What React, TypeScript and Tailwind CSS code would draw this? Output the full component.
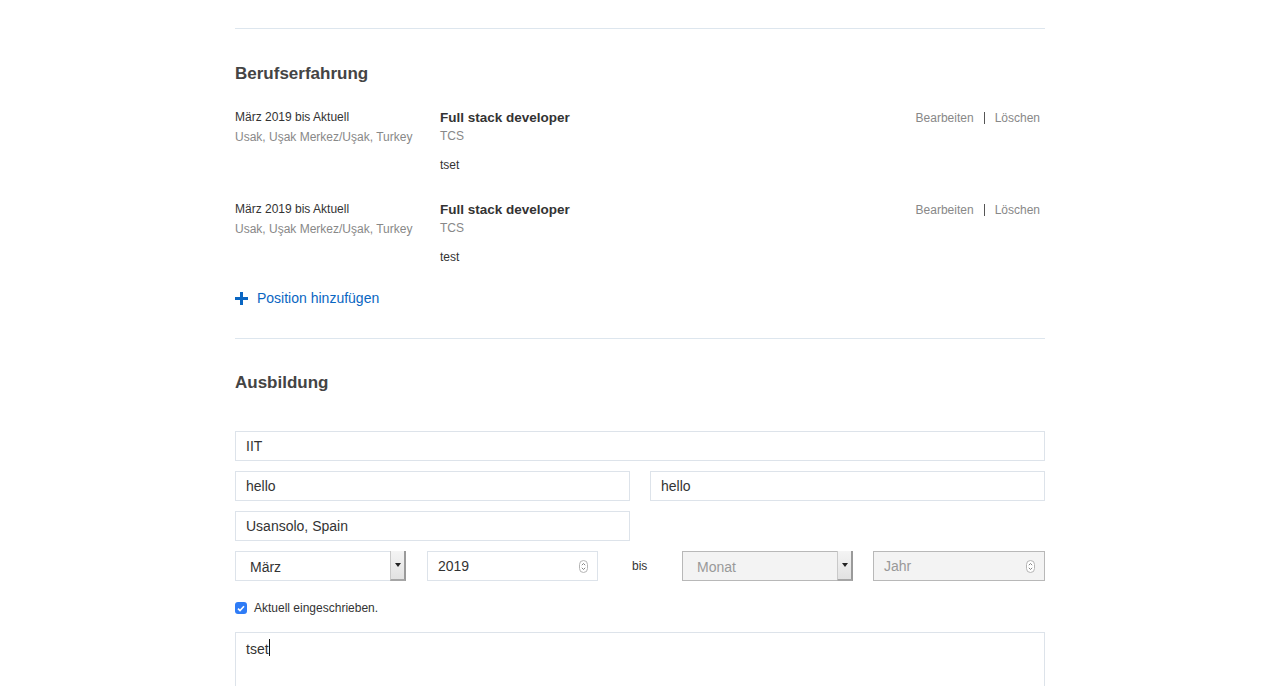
import React from "react";

const EXPERIENCE = [
  { date: "März 2019 bis Aktuell", place: "Usak, Uşak Merkez/Uşak, Turkey", title: "Full stack developer", company: "TCS", text: "tset" },
  { date: "März 2019 bis Aktuell", place: "Usak, Uşak Merkez/Uşak, Turkey", title: "Full stack developer", company: "TCS", text: "test" },
];

function SelectBox({ value, disabled }: { value: string; disabled?: boolean }) {
  return (
    <div
      className={`relative h-[30px] w-[171px] flex items-center border ${
        disabled ? "bg-[#f3f3f3] border-[#b8b8b8] text-[#999]" : "bg-white border-[#dde3ea] text-[#333]"
      }`}
    >
      <span className="pl-[14px] pt-[2px] text-[14px]">{value}</span>
      {/* native-looking arrow button */}
      <div className="absolute right-[-1px] top-[-1px] h-[30px] w-[16px] bg-gradient-to-b from-[#f4f4f4] to-[#e2e2e2] border-l border-[#c9c9c9] border-r-2 border-r-[#9a9a9a] border-b-2 border-b-[#a6a6a6] flex items-center justify-center">
        <svg width="6" height="4" viewBox="0 0 6 4">
          <path d="M0 0h6L3 4z" fill="#222" />
        </svg>
      </div>
    </div>
  );
}

function NumberBox({ value, placeholder, disabled }: { value?: string; placeholder?: string; disabled?: boolean }) {
  return (
    <div
      className={`h-[30px] flex items-center justify-between pl-[10px] pr-[9px] border ${
        disabled ? "bg-[#f3f3f3] border-[#b8b8b8]" : "bg-white border-[#dde3ea]"
      }`}
    >
      <span className={`text-[14px] ${value ? "text-[#333]" : "text-[#999]"}`}>{value || placeholder}</span>
      <svg width="9" height="13" viewBox="0 0 9 13">
        <rect x="0.5" y="0.5" width="8" height="12" rx="4" fill="#fff" stroke="#b5b5b5" />
        <path d="M2.8 5.2L4.5 3.5l1.7 1.7M2.8 7.8l1.7 1.7 1.7-1.7" fill="none" stroke="#777" strokeWidth="0.9" />
      </svg>
    </div>
  );
}

function TextBox({ value, className = "" }: { value: string; className?: string }) {
  return (
    <div className={`h-[30px] flex items-center px-[10px] border border-[#dde3ea] bg-white text-[14px] text-[#333] ${className}`}>
      {value}
    </div>
  );
}

export default function App() {
  return (
    <div className="min-h-[686px] bg-white font-['Liberation_Sans',Arial,sans-serif] overflow-hidden">
      <div className="w-[810px] mx-auto pt-[28px]">
        <div className="border-t border-[#dde6ee]" />

        {/* Berufserfahrung */}
        <h2 className="mt-[34px] text-[17px] font-bold text-[#444] leading-[22px]">Berufserfahrung</h2>

        <div className="mt-[25px] flex flex-col gap-[29px]">
          {EXPERIENCE.map((job, i) => (
            <div key={i} className="flex">
              <div className="w-[205px] shrink-0">
                <div className="text-[12px] text-[#333] leading-[15px]">{job.date}</div>
                <div className="mt-[5px] text-[12px] text-[#888] leading-[15px]">{job.place}</div>
              </div>
              <div className="flex-1">
                <div className="text-[13.5px] font-bold text-[#333] leading-[17px] mt-[-1px]">{job.title}</div>
                <div className="mt-[3px] text-[12px] text-[#888] leading-[15px]">{job.company}</div>
                <div className="mt-[14px] text-[12px] text-[#333] leading-[15px]">{job.text}</div>
              </div>
              <div className="flex items-start text-[12px] text-[#888] leading-[15px] pt-[1px] pr-[5px]">
                <span>Bearbeiten</span>
                <span className="mx-[10px] w-px h-[12px] bg-[#555] mt-[1px]" />
                <span>Löschen</span>
              </div>
            </div>
          ))}
        </div>

        <div className="mt-[25px] flex items-center gap-[9px] text-[14px] text-[#0a66c2] leading-[16px]">
          <svg width="13" height="13" viewBox="0 0 13 13">
            <path d="M5 0h3v5h5v3H8v5H5V8H0V5h5z" fill="#0a66c2" />
          </svg>
          <span>Position hinzufügen</span>
        </div>

        <div className="mt-[32px] border-t border-[#dde6ee]" />

        {/* Ausbildung */}
        <h2 className="mt-[33px] text-[17px] font-bold text-[#444] leading-[22px]">Ausbildung</h2>

        <div className="mt-[37px] flex flex-col gap-[10px]">
          <TextBox value="IIT" />
          <div className="flex gap-[20px]">
            <TextBox value="hello" className="flex-1" />
            <TextBox value="hello" className="flex-1" />
          </div>
          <div className="flex">
            <TextBox value="Usansolo, Spain" className="w-[395px]" />
          </div>
          <div className="flex items-center">
            <SelectBox value="März" />
            <div className="ml-[21px] w-[171px]">
              <NumberBox value="2019" />
            </div>
            <div className="w-[84px] pl-[34px] text-[12px] text-[#333]">bis</div>
            <SelectBox value="Monat" disabled />
            <div className="ml-[20px] w-[172px]">
              <NumberBox placeholder="Jahr" disabled />
            </div>
          </div>
        </div>

        <label className="mt-[18px] flex items-center gap-[7px] text-[12px] text-[#333]">
          <span className="w-[12px] h-[12px] rounded-[3px] bg-[#2f7cf6] flex items-center justify-center">
            <svg width="8" height="7" viewBox="0 0 8 7">
              <path d="M1 3.6l2 2L7 1.2" fill="none" stroke="#fff" strokeWidth="1.6" />
            </svg>
          </span>
          Aktuell eingeschrieben.
        </label>

        <div className="mt-[15px] h-[60px] border border-[#dde3ea] px-[10px] pt-[6px] text-[14px] text-[#333] flex items-start">
          <span>tset</span>
          <span className="w-px h-[17px] bg-[#111]" />
        </div>
      </div>
    </div>
  );
}
